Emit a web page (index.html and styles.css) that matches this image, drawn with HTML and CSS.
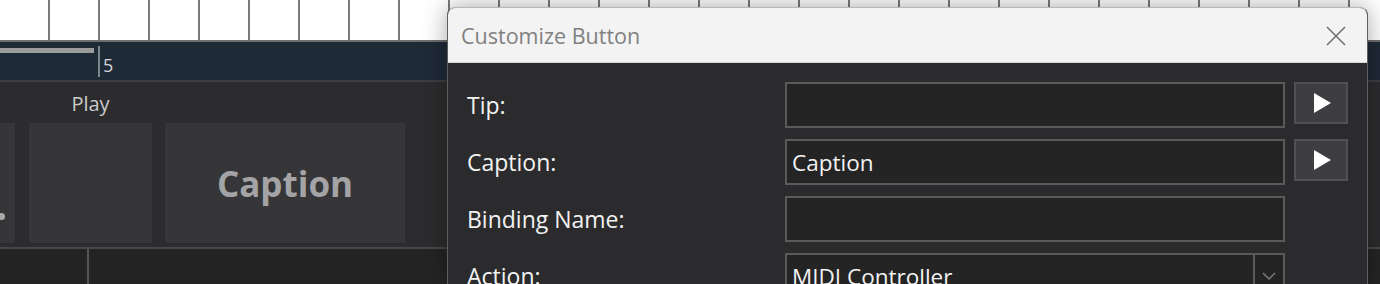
FILE: index.html
```html
<!DOCTYPE html>
<html lang="en">

<head>
    <meta charset="UTF-8">
    <meta name="viewport" content="width=device-width, initial-scale=1.0">
    <title>Customize Button</title>
    <link rel="stylesheet" href="styles.css">
</head>

<body>
    <!-- Fondo: pista de la aplicación -->
    <div class="app">
        <div class="ruler"></div>

        <div class="timeline">
            <div class="progress"></div>
            <div class="marker"></div>
            <span class="bar-number">5</span>
        </div>

        <section class="panel">
            <div class="pad-col pad-col-edge">
                <div class="pad">
                    <span class="knob"></span>
                </div>
            </div>
            <div class="pad-col pad-col-small">
                <div class="pad-label">Play</div>
                <div class="pad"></div>
            </div>
            <div class="pad-col pad-col-wide">
                <div class="pad-label"></div>
                <div class="pad pad-caption">Caption</div>
            </div>
        </section>

        <footer class="footer">
            <div class="footer-cell"></div>
        </footer>
    </div>

    <!-- Diálogo -->
    <div class="dialog">
        <div class="dialog-title">
            <span>Customize Button</span>
            <svg class="close" width="20" height="20" viewBox="0 0 20 20">
                <path d="M1 1 L19 19 M19 1 L1 19" stroke="#6e6e6e" stroke-width="1.5" fill="none" />
            </svg>
        </div>

        <div class="dialog-body">
            <label class="field-label">Tip:</label>
            <div class="field"></div>
            <button class="play-btn">
                <svg width="17" height="20" viewBox="0 0 17 20"><polygon points="0,0 17,10 0,20" fill="#ffffff" /></svg>
            </button>

            <label class="field-label">Caption:</label>
            <div class="field">Caption</div>
            <button class="play-btn">
                <svg width="17" height="20" viewBox="0 0 17 20"><polygon points="0,0 17,10 0,20" fill="#ffffff" /></svg>
            </button>

            <label class="field-label">Binding Name:</label>
            <div class="field"></div>
            <div></div>

            <label class="field-label">Action:</label>
            <div class="field field-select">
                <span class="select-value">MIDI Controller</span>
                <span class="select-arrow">
                    <svg width="14" height="8" viewBox="0 0 14 8">
                        <path d="M1 1 L7 7 L13 1" stroke="#7a7a7a" stroke-width="1.5" fill="none" />
                    </svg>
                </span>
            </div>
            <div></div>
        </div>
    </div>
</body>

</html>
```

FILE: styles.css
```css
body {
    margin: 0;
    background-color: #232323;
    font-family: "Open Sans", "Noto Sans", sans-serif;
    overflow: hidden;
    height: 284px;
}

/* Fondo */
.app {
    display: flex;
    flex-direction: column;
}

.ruler {
    height: 40px;
    background: repeating-linear-gradient(90deg, #ffffff 0 48px, #7a7a7a 48px 50px);
    border-bottom: 2px solid #6f6f6f;
}

.timeline {
    display: flex;
    align-items: flex-start;
    height: 38px;
    background-color: #1f2a37;
    border-bottom: 2px solid #3b3e42;
}

.progress {
    width: 94px;
    height: 5px;
    margin-top: 6px;
    background-color: #9b9b9b;
}

.marker {
    width: 2px;
    height: 31px;
    margin-left: 4px;
    margin-top: 4px;
    background-color: #7f858d;
}

.bar-number {
    margin-left: 3px;
    margin-top: 14px;
    font-size: 18px;
    line-height: 18px;
    color: #d6d6d6;
}

.panel {
    display: flex;
    gap: 14px;
    height: 165px;
    background-color: #2c2c2e;
    padding-top: 10px;
    box-sizing: border-box;
}

.pad-col {
    display: flex;
    flex-direction: column;
}

.pad-col-edge {
    width: 15px;
    padding-top: 31px;
}

.pad-col-small {
    width: 123px;
}

.pad-col-wide {
    width: 240px;
    margin-left: -1px;
}

.pad-label {
    height: 24px;
    margin-bottom: 7px;
    text-align: center;
    font-size: 20px;
    line-height: 24px;
    color: #cacaca;
}

.pad {
    height: 120px;
    background-color: #363638;
}

.pad-col-edge .pad {
    display: flex;
    align-items: flex-end;
    padding-bottom: 23px;
    box-sizing: border-box;
}

.knob {
    width: 7px;
    height: 7px;
    margin-left: -2px;
    border-radius: 50%;
    background-color: #a9a9a9;
}

.pad-caption {
    display: flex;
    align-items: center;
    justify-content: center;
    font-size: 35px;
    font-weight: bold;
    color: #a4a4a6;
}

.footer {
    height: 35px;
    border-top: 2px solid #484848;
    background-color: #242424;
}

.footer-cell {
    width: 87px;
    height: 100%;
    border-right: 2px solid #555555;
}

/* Diálogo */
.dialog {
    position: absolute;
    left: 447px;
    top: 7px;
    width: 919px;
    height: 277px;
    border: 1px solid #5e5e5e;
    border-top-color: #b9b9b9;
    border-bottom: none;
    border-radius: 8px 8px 0 0;
    overflow: hidden;
    background-color: #2b2b2d;
    box-shadow: 0 0 24px rgba(0, 0, 0, 0.35);
}

.dialog-title {
    display: flex;
    align-items: center;
    justify-content: space-between;
    height: 54px;
    padding: 0 21px 0 13px;
    background-color: #f3f3f3;
    border-bottom: 1px solid #d6d6d6;
    font-size: 21.5px;
    color: #808080;
}

.close {
    margin-top: 1px;
}

.dialog-body {
    display: grid;
    grid-template-columns: 1fr 500px 54px;
    grid-auto-rows: 46px;
    column-gap: 9px;
    row-gap: 11px;
    padding: 19px 19px 0 19px;
}

.field-label {
    display: flex;
    align-items: center;
    font-size: 23px;
    color: #f2f2f2;
}

.field {
    display: flex;
    align-items: center;
    box-sizing: border-box;
    padding-left: 5px;
    border: 2px solid #5a5a5a;
    background-color: #242425;
    font-size: 22.5px;
    color: #f2f2f2;
}

.field-select {
    padding-left: 5px;
    justify-content: space-between;
}

.select-arrow {
    display: flex;
    align-items: center;
    justify-content: center;
    align-self: stretch;
    width: 28px;
    border-left: 2px solid #5a5a5a;
}

.play-btn {
    display: flex;
    align-items: center;
    justify-content: center;
    height: 42px;
    padding: 0;
    padding-left: 2px;
    border: 2px solid #4f4f55;
    background-color: #3d3d42;
}
```
